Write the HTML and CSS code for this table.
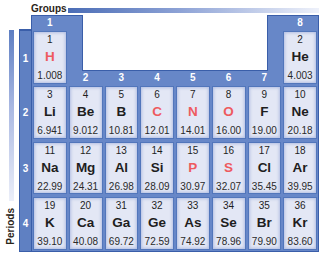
FILE: index.html
```html
<!DOCTYPE html>
<html>
<head>
<meta charset="utf-8">
<link rel="stylesheet" href="styles.css">
</head>
<body>
<div class="page">
  <div class="groups-head"><span class="groups-title">Groups</span><span class="groups-bar"></span></div>
  <div class="periods-rail"><span class="periods-bar"></span><span class="periods-title">Periods</span></div>
  <div class="table">
    <div class="corner"></div>
    <div class="cutout"></div>
    <div class="glabel g1">1</div>
    <div class="glabel g8">8</div>
    <div class="glabel band g2">2</div>
    <div class="glabel band g3">3</div>
    <div class="glabel band g4">4</div>
    <div class="glabel band g5">5</div>
    <div class="glabel band g6">6</div>
    <div class="glabel band g7">7</div>
    <div class="plabel p1">1</div>
    <div class="plabel p2">2</div>
    <div class="plabel p3">3</div>
    <div class="plabel p4">4</div>

    <div class="cell h-cell"><span class="num">1</span><span class="sym red">H</span><span class="mass">1.008</span></div>
    <div class="cell he-cell"><span class="num">2</span><span class="sym">He</span><span class="mass">4.003</span></div>

    <div class="cell"><span class="num">3</span><span class="sym">Li</span><span class="mass">6.941</span></div>
    <div class="cell"><span class="num">4</span><span class="sym">Be</span><span class="mass">9.012</span></div>
    <div class="cell"><span class="num">5</span><span class="sym">B</span><span class="mass">10.81</span></div>
    <div class="cell"><span class="num">6</span><span class="sym red">C</span><span class="mass">12.01</span></div>
    <div class="cell"><span class="num">7</span><span class="sym red">N</span><span class="mass">14.01</span></div>
    <div class="cell"><span class="num">8</span><span class="sym red">O</span><span class="mass">16.00</span></div>
    <div class="cell"><span class="num">9</span><span class="sym">F</span><span class="mass">19.00</span></div>
    <div class="cell"><span class="num">10</span><span class="sym">Ne</span><span class="mass">20.18</span></div>

    <div class="cell"><span class="num">11</span><span class="sym">Na</span><span class="mass">22.99</span></div>
    <div class="cell"><span class="num">12</span><span class="sym">Mg</span><span class="mass">24.31</span></div>
    <div class="cell"><span class="num">13</span><span class="sym">Al</span><span class="mass">26.98</span></div>
    <div class="cell"><span class="num">14</span><span class="sym">Si</span><span class="mass">28.09</span></div>
    <div class="cell"><span class="num">15</span><span class="sym red">P</span><span class="mass">30.97</span></div>
    <div class="cell"><span class="num">16</span><span class="sym red">S</span><span class="mass">32.07</span></div>
    <div class="cell"><span class="num">17</span><span class="sym">Cl</span><span class="mass">35.45</span></div>
    <div class="cell"><span class="num">18</span><span class="sym">Ar</span><span class="mass">39.95</span></div>

    <div class="cell"><span class="num">19</span><span class="sym">K</span><span class="mass">39.10</span></div>
    <div class="cell"><span class="num">20</span><span class="sym">Ca</span><span class="mass">40.08</span></div>
    <div class="cell"><span class="num">31</span><span class="sym">Ga</span><span class="mass">69.72</span></div>
    <div class="cell"><span class="num">32</span><span class="sym">Ge</span><span class="mass">72.59</span></div>
    <div class="cell"><span class="num">33</span><span class="sym">As</span><span class="mass">74.92</span></div>
    <div class="cell"><span class="num">34</span><span class="sym">Se</span><span class="mass">78.96</span></div>
    <div class="cell"><span class="num">35</span><span class="sym">Br</span><span class="mass">79.90</span></div>
    <div class="cell"><span class="num">36</span><span class="sym">Kr</span><span class="mass">83.60</span></div>
  </div>
</div>
</body>
</html>
```
FILE: styles.css
```css
html, body {
  margin: 0;
  padding: 0;
  background: #ffffff;
}
body {
  width: 323px;
  height: 257px;
  overflow: hidden;
  font-family: "Liberation Sans", Arial, sans-serif;
}
.page {
  display: grid;
  grid-template-columns: 19px 300px;
  grid-template-rows: 15px 237px;
}

/* Groups heading */
.groups-head {
  grid-column: 2;
  grid-row: 1;
  display: flex;
  align-items: flex-end;
  padding-left: 12px;
  padding-bottom: 2px;
}
.groups-title {
  font-size: 10px;
  font-weight: bold;
  line-height: 11px;
  color: #2a2418;
  margin-bottom: -1px;
}
.groups-bar {
  flex: 1;
  height: 5px;
  margin-left: 1px;
  background: linear-gradient(to right, #4b6db6 0%, #8ea3d6 45%, #eef1fa 100%);
}

/* Periods rail */
.periods-rail {
  grid-column: 1;
  grid-row: 2;
  display: flex;
  flex-direction: column;
  align-items: flex-start;
  padding-top: 15px;
  padding-bottom: 7px;
}
.periods-bar {
  flex: 1;
  width: 5px;
  margin-left: 9px;
  background: linear-gradient(to bottom, #5d7ec2 0%, #a9b8e2 45%, #eceff9 100%);
}
.periods-title {
  margin-top: 7px;
  margin-left: 5px;
  writing-mode: vertical-rl;
  transform: rotate(180deg);
  font-size: 10px;
  font-weight: bold;
  line-height: 11px;
  color: #2a2418;
}

/* Table */
.table {
  grid-column: 2;
  grid-row: 2;
  display: grid;
  grid-template-columns: 12px repeat(8, 1fr);
  grid-template-rows: 14px repeat(4, 1fr);
  background: #6787c8;
  border: 1px solid #3a5ea9;
}
.corner {
  grid-column: 1;
  grid-row: 1;
  margin: -1px 0 0 -1px;
  background: #ffffff;
  border-right: 1px solid #3a5ea9;
  border-bottom: 1px solid #3a5ea9;
}
.cutout {
  grid-column: 3 / 9;
  grid-row: 1 / 3;
  margin: -1px 14px 14px 14px;
  background: #ffffff;
  border: 1px solid #3a5ea9;
  border-top: none;
}
.glabel {
  display: flex;
  align-items: center;
  justify-content: center;
  color: #ffffff;
  font-size: 10px;
  font-weight: bold;
  line-height: 14px;
}
.g1 { grid-column: 2; grid-row: 1; }
.g8 { grid-column: 9; grid-row: 1; }
.band {
  grid-row: 2;
  align-self: end;
  height: 15px;
}
.g2 { grid-column: 3; }
.g3 { grid-column: 4; }
.g4 { grid-column: 5; }
.g5 { grid-column: 6; }
.g6 { grid-column: 7; }
.g7 { grid-column: 8; }

.plabel {
  grid-column: 1;
  display: flex;
  align-items: center;
  justify-content: center;
  background: #5f80c2;
  border-right: 1px solid #3a5ea9;
  color: #ffffff;
  font-size: 10px;
  font-weight: bold;
}
.p1 { grid-row: 2; border-top: 1px solid #3a5ea9; }
.p2 { grid-row: 3; }
.p3 { grid-row: 4; }
.p4 { grid-row: 5; }

.cell {
  margin: 1px 1px 1.5px 1px;
  display: flex;
  flex-direction: column;
  align-items: center;
  background: #e3e7f5;
  border: 1px solid #5276bb;
  box-shadow: inset 0 0 3px 1px rgba(120, 142, 205, 0.45);
  color: #1e1e1e;
}
.h-cell { grid-column: 2; grid-row: 2; }
.he-cell { grid-column: 9; grid-row: 2; }
.num {
  margin-top: 2px;
  font-size: 10px;
  line-height: 12px;
}
.sym {
  margin-top: 2px;
  font-size: 13.5px;
  font-weight: bold;
  line-height: 18px;
}
.red {
  color: #ee5a5f;
}
.mass {
  margin-top: 4px;
  font-size: 10px;
  line-height: 12px;
  color: #2a2a2a;
}
```
